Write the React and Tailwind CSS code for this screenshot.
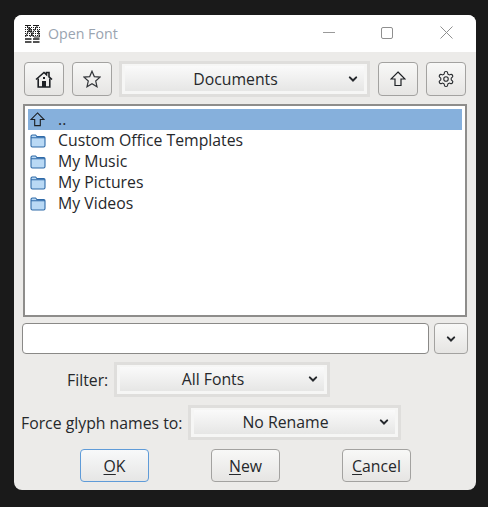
import React from "react";

const Chevron = () => (
  <svg width="10" height="8" viewBox="0 0 10 8" fill="none" stroke="#26292d" strokeWidth="2" strokeLinecap="round" strokeLinejoin="miter">
    <path d="M1.8 2.4 L5 5.5 L8.2 2.4" />
  </svg>
);

const Home = () => (
  <svg width="18" height="17" viewBox="0 0 18 17" fill="none" stroke="#1d2024" strokeWidth="1.6" strokeLinejoin="miter">
    <path d="M1 8.5 L9 1.5 L11.5 3.7 V1.5 H14 V5.8 L17 8.5" />
    <path d="M3.2 7.5 V16 H14.8 V7.5" />
    <rect x="7" y="10" width="4" height="6" fill="#1d2024" stroke="none" />
    <rect x="8" y="6" width="2" height="2" fill="#1d2024" stroke="none" />
  </svg>
);

const Star = () => (
  <svg width="18" height="18" viewBox="0 0 18 18" fill="none" stroke="#33363a" strokeWidth="1.2" strokeLinejoin="miter">
    <path d="M9 1.2 L11.3 6.6 L17 7.1 L12.7 11 L14 16.8 L9 13.8 L4 16.8 L5.3 11 L1 7.1 L6.7 6.6 Z" />
  </svg>
);

const UpArrow = ({ size = 16 }) => (
  <svg width={size} height={size} viewBox="0 0 16 16" fill="none" stroke="#1d2024" strokeWidth="1.2" strokeLinejoin="miter">
    <path d="M8 1 L15 8 H11 V14.5 H5 V8 H1 Z" />
  </svg>
);

const Gear = () => (
  <svg width="18" height="18" viewBox="0 0 24 24" fill="none" stroke="#2a2d31" strokeWidth="1.5" strokeLinecap="round" strokeLinejoin="round">
    <path d="M12.22 2h-.44a2 2 0 0 0-2 2v.18a2 2 0 0 1-1 1.73l-.43.25a2 2 0 0 1-2 0l-.15-.08a2 2 0 0 0-2.73.73l-.22.38a2 2 0 0 0 .73 2.73l.15.1a2 2 0 0 1 1 1.72v.51a2 2 0 0 1-1 1.74l-.15.09a2 2 0 0 0-.73 2.73l.22.38a2 2 0 0 0 2.73.73l.15-.08a2 2 0 0 1 2 0l.43.25a2 2 0 0 1 1 1.73V20a2 2 0 0 0 2 2h.44a2 2 0 0 0 2-2v-.18a2 2 0 0 1 1-1.73l.43-.25a2 2 0 0 1 2 0l.15.08a2 2 0 0 0 2.73-.73l.22-.39a2 2 0 0 0-.73-2.73l-.15-.08a2 2 0 0 1-1-1.74v-.5a2 2 0 0 1 1-1.74l.15-.09a2 2 0 0 0 .73-2.73l-.22-.38a2 2 0 0 0-2.73-.73l-.15.08a2 2 0 0 1-2 0l-.43-.25a2 2 0 0 1-1-1.73V4a2 2 0 0 0-2-2z" />
    <circle cx="12" cy="12" r="3" />
  </svg>
);

const Folder = () => (
  <svg width="16" height="14" viewBox="0 0 16 14" fill="#b9d9f5" stroke="#2f6aa8" strokeWidth="1.1" strokeLinejoin="round">
    <path d="M1 2.4 Q1 1 2.4 1 H5.6 L7 2.6 H13.8 Q15 2.6 15 3.8 V11.6 Q15 13 13.6 13 H2.4 Q1 13 1 11.6 Z" />
    <path d="M1 3.8 H15" fill="none" />
  </svg>
);

const AppIcon = () => (
  <svg width="17" height="18" viewBox="0 0 17 18" fill="none" stroke="#1b1b1b" strokeWidth="1">
    <path d="M1 0.5 H7 M9 0.5 H15 M3 0.5 L9.5 12 M13.5 0.5 L6 12 M1.5 12 L6 3 L8 7 M10 12 L15.5 12 M14 5 L15.5 12" />
    <path d="M1 2.5 H16 M1 4.5 H16 M1 6.5 H16 M1 8.5 H16 M1 10.5 H16" strokeDasharray="1 1" strokeWidth="1" />
    <path d="M1 14 H7.5 M9 14 H15.5 M1 17 H7.5 M9 17 H15.5" strokeWidth="1.3" />
  </svg>
);

const btn = "flex items-center justify-center rounded-[4px] border border-[#a3a2a0] bg-gradient-to-b from-[#f8f8f7] to-[#e6e5e3]";

const Combo = ({ className, label }) => (
  <div className={`border-[3px] border-[#dfdedc] bg-[#f6f6f5] pt-[2px] px-[3px] pb-[3px] ${className}`}>
    <div className="relative h-full flex items-center justify-center bg-gradient-to-b from-[#fafafa] to-[#e6e6e5] pr-[18px] pt-[2px]">
      <span>{label}</span>
      <span className="absolute right-[6px] top-1/2 -translate-y-1/2 flex"><Chevron /></span>
    </div>
  </div>
);

const Row = ({ icon, label, selected }) => (
  <div className={`h-[21px] flex items-center ${selected ? "bg-[#86b0dc]" : ""}`}>
    <span className="w-[30px] pl-[2px] flex justify-start items-center">{icon}</span>
    <span className="leading-[21px]">{label}</span>
  </div>
);

export default function App() {
  return (
    <div className="w-[488px] h-[507px] bg-[#1a1a1a] pt-[15px] pl-[14px] text-[#26282b] text-[15.8px]" style={{ fontFamily: '"Open Sans", "Noto Sans", sans-serif' }}>
      <div className="w-[462px] h-[475px] rounded-[8px] overflow-hidden bg-[#ecebe9] flex flex-col">
        <div className="h-[37px] bg-white flex items-center pl-[10px] shrink-0">
          <AppIcon />
          <span className="ml-[7px] text-[#9aa4b0] text-[14.2px]">Open Font</span>
          <div className="ml-auto flex items-center">
            <svg width="58" height="37" viewBox="0 0 58 37" stroke="#9a9a9a" fill="none"><path d="M20 17.5 H32" strokeWidth="1" /></svg>
            <svg width="58" height="37" viewBox="0 0 58 37" stroke="#8f8f8f" fill="none" className="-ml-[1px]"><rect x="21.5" y="12.5" width="11" height="11" rx="1.5" strokeWidth="1" /></svg>
            <svg width="58" height="37" viewBox="0 0 58 37" stroke="#8f8f8f" fill="none" className="-ml-[1px] mr-[1px]"><path d="M23.5 11.5 L35.5 23.5 M35.5 11.5 L23.5 23.5" strokeWidth="1" /></svg>
          </div>
        </div>

        <div className="flex-1 flex flex-col pt-[9px]">
          <div className="flex items-center h-[36px] pl-[10px] gap-[8px]">
            <div className={`${btn} w-[40px] h-[34px]`}><Home /></div>
            <div className={`${btn} w-[40px] h-[34px]`}><Star /></div>
            <Combo className="w-[251px] h-[36px] -ml-[1px]" label="Documents" />
            <div className={`${btn} w-[40px] h-[34px]`}><UpArrow /></div>
            <div className={`${btn} w-[40px] h-[34px]`}><Gear /></div>
          </div>

          <div className="ml-[9px] mt-[7px] w-[444px] h-[213px] border-[2px] border-[#8e8d8b] bg-white p-[3px]">
            <Row selected label=".." icon={<UpArrow size={15} />} />
            <Row label="Custom Office Templates" icon={<Folder />} />
            <Row label="My Music" icon={<Folder />} />
            <Row label="My Pictures" icon={<Folder />} />
            <Row label="My Videos" icon={<Folder />} />
          </div>

          <div className="flex ml-[8px] mt-[6px] gap-[5px] h-[31px]">
            <div className="w-[407px] rounded-[4px] border border-[#8a8987] bg-white" />
            <div className={`${btn} w-[34px]`}><Chevron /></div>
          </div>

          <div className="flex items-center h-[35px] mt-[8px] ml-[53px]">
            <span className="w-[47px] pt-[2px]">Filter:</span>
            <Combo className="w-[216px] h-[35px]" label="All Fonts" />
          </div>

          <div className="flex items-center h-[35px] mt-[8px] ml-[7px]">
            <span className="w-[167px] whitespace-nowrap pt-[2px]">Force glyph names to:</span>
            <Combo className="w-[213px] h-[35px]" label="No Rename" />
          </div>

          <div className="flex ml-[66px] mt-[9px] gap-[62px]">
            <div className="flex items-center justify-center w-[69px] h-[33px] pt-[2px] rounded-[4px] border border-[#5f9bd8] bg-gradient-to-b from-[#f8f9fa] to-[#e6e6e5]"><span><span className="underline underline-offset-2">O</span>K</span></div>
            <div className={`${btn} w-[69px] h-[33px] pt-[2px]`}><span><span className="underline underline-offset-2">N</span>ew</span></div>
            <div className={`${btn} w-[69px] h-[33px] pt-[2px]`}><span><span className="underline underline-offset-2">C</span>ancel</span></div>
          </div>
        </div>
      </div>
    </div>
  );
}
